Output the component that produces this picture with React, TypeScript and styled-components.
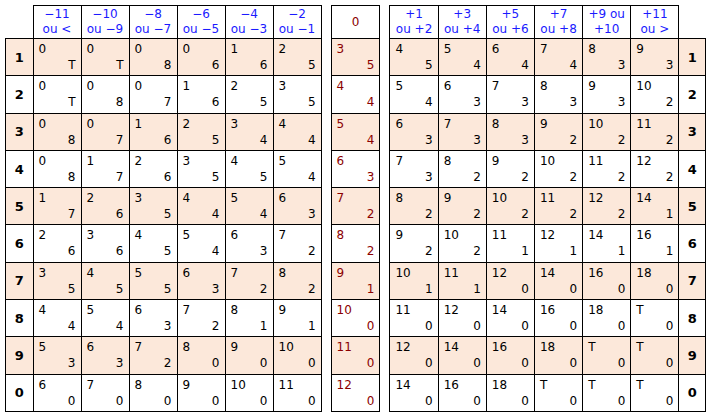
import React from 'react';
import styled, { createGlobalStyle } from 'styled-components';

const GlobalStyle = createGlobalStyle`
  html, body {
    margin: 0;
    padding: 0;
    background: #ffffff;
  }
  body {
    font-family: 'DejaVu Sans', Verdana, sans-serif;
  }
`;

const Colors = {
  PEACH: '#fce8da',
  BLUE: '#1a1aff',
  MAROON: '#8b0000',
  BORDER: '#000000',
  TEXT: '#000000',
};

type Pair = [string, string];

const rowLabels = ['1', '2', '3', '4', '5', '6', '7', '8', '9', '0'];

const leftHeads = [
  ['−11', 'ou <'],
  ['−10', 'ou −9'],
  ['−8', 'ou −7'],
  ['−6', 'ou −5'],
  ['−4', 'ou −3'],
  ['−2', 'ou −1'],
];

const rightHeads = [
  ['+1', 'ou +2'],
  ['+3', 'ou +4'],
  ['+5', 'ou +6'],
  ['+7', 'ou +8'],
  ['+9 ou', '+10'],
  ['+11', 'ou >'],
];

const parse = (s: string): Pair[] => s.split(' ').map((c) => c.split('/') as Pair);

const leftRows: Pair[][] = [
  '0/T 0/T 0/8 0/6 1/6 2/5',
  '0/T 0/8 0/7 1/6 2/5 3/5',
  '0/8 0/7 1/6 2/5 3/4 4/4',
  '0/8 1/7 2/6 3/5 4/5 5/4',
  '1/7 2/6 3/5 4/4 5/4 6/3',
  '2/6 3/6 4/5 5/4 6/3 7/2',
  '3/5 4/5 5/5 6/3 7/2 8/2',
  '4/4 5/4 6/3 7/2 8/1 9/1',
  '5/3 6/3 7/2 8/0 9/0 10/0',
  '6/0 7/0 8/0 9/0 10/0 11/0',
].map(parse);

const middleRows: Pair[] = parse('3/5 4/4 5/4 6/3 7/2 8/2 9/1 10/0 11/0 12/0');

const rightRows: Pair[][] = [
  '4/5 5/4 6/4 7/4 8/3 9/3',
  '5/4 6/3 7/3 8/3 9/3 10/2',
  '6/3 7/3 8/3 9/2 10/2 11/2',
  '7/3 8/2 9/2 10/2 11/2 12/2',
  '8/2 9/2 10/2 11/2 12/2 14/1',
  '9/2 10/2 11/1 12/1 14/1 16/1',
  '10/1 11/1 12/0 14/0 16/0 18/0',
  '11/0 12/0 14/0 16/0 18/0 T/0',
  '12/0 14/0 16/0 18/0 T/0 T/0',
  '14/0 16/0 18/0 T/0 T/0 T/0',
].map(parse);

const Page = styled.div`
  display: flex;
  align-items: flex-start;
  gap: 9px;
  padding: 5px;
`;

const Table = styled.table<{ $width: number }>`
  border-collapse: collapse;
  table-layout: fixed;
  width: ${(p) => p.$width}px;
  font-size: 12px;
  color: ${Colors.TEXT};
`;

const HeadRow = styled.tr`
  height: 33px;
`;

const BodyRow = styled.tr<{ $shaded: boolean }>`
  height: 37.3px;
  background: ${(p) => (p.$shaded ? Colors.PEACH : '#ffffff')};
`;

const Corner = styled.th<{ $width: number }>`
  width: ${(p) => p.$width}px;
  border: none;
  background: #ffffff;
  padding: 0;
`;

const HeadCell = styled.th<{ $tone?: 'blue' | 'maroon' }>`
  border: 1px solid ${Colors.BORDER};
  background: #ffffff;
  padding: 0;
  font-weight: normal;
  font-size: 12px;
  line-height: 15px;
  text-align: center;
  vertical-align: middle;
  color: ${(p) => (p.$tone === 'maroon' ? Colors.MAROON : Colors.BLUE)};
  white-space: nowrap;
`;

const LabelCell = styled.td`
  border: 1px solid ${Colors.BORDER};
  padding: 0;
  text-align: center;
  vertical-align: middle;
  font-weight: bold;
  font-size: 13px;
`;

const ValueCell = styled.td<{ $tone?: 'maroon' }>`
  border: 1px solid ${Colors.BORDER};
  padding: 0;
  vertical-align: top;
  color: ${(p) => (p.$tone === 'maroon' ? Colors.MAROON : Colors.TEXT)};
`;

const CellBox = styled.div`
  box-sizing: border-box;
  height: 36px;
  padding: 3px 5px 2px 5px;
  display: flex;
  flex-direction: column;
  justify-content: space-between;
  line-height: 15px;
`;

const Top = styled.span`
  text-align: left;
`;

const Bottom = styled.span`
  text-align: right;
`;

const Pairs = ({ pair, tone }: { pair: Pair; tone?: 'maroon' }) => (
  <ValueCell $tone={tone}>
    <CellBox>
      <Top>{pair[0]}</Top>
      <Bottom>{pair[1]}</Bottom>
    </CellBox>
  </ValueCell>
);

const Heads = ({ heads }: { heads: string[][] }) => (
  <>
    {heads.map((h) => (
      <HeadCell key={h.join('-')}>
        {h[0]}
        <br />
        {h[1]}
      </HeadCell>
    ))}
  </>
);

export default function App() {
  return (
    <>
      <GlobalStyle />
      <Page>
        <Table $width={317}>
          <thead>
            <HeadRow>
              <Corner $width={27} />
              <Heads heads={leftHeads} />
            </HeadRow>
          </thead>
          <tbody>
            {leftRows.map((row, i) => (
              <BodyRow key={i} $shaded={i % 2 === 0}>
                <LabelCell>{rowLabels[i]}</LabelCell>
                {row.map((p, j) => (
                  <Pairs key={j} pair={p} />
                ))}
              </BodyRow>
            ))}
          </tbody>
        </Table>

        <Table $width={50}>
          <thead>
            <HeadRow>
              <HeadCell $tone="maroon">0</HeadCell>
            </HeadRow>
          </thead>
          <tbody>
            {middleRows.map((p, i) => (
              <BodyRow key={i} $shaded={i % 2 === 0}>
                <Pairs pair={p} tone="maroon" />
              </BodyRow>
            ))}
          </tbody>
        </Table>

        <Table $width={317}>
          <thead>
            <HeadRow>
              <Heads heads={rightHeads} />
              <Corner $width={26} />
            </HeadRow>
          </thead>
          <tbody>
            {rightRows.map((row, i) => (
              <BodyRow key={i} $shaded={i % 2 === 0}>
                {row.map((p, j) => (
                  <Pairs key={j} pair={p} />
                ))}
                <LabelCell>{rowLabels[i]}</LabelCell>
              </BodyRow>
            ))}
          </tbody>
        </Table>
      </Page>
    </>
  );
}
